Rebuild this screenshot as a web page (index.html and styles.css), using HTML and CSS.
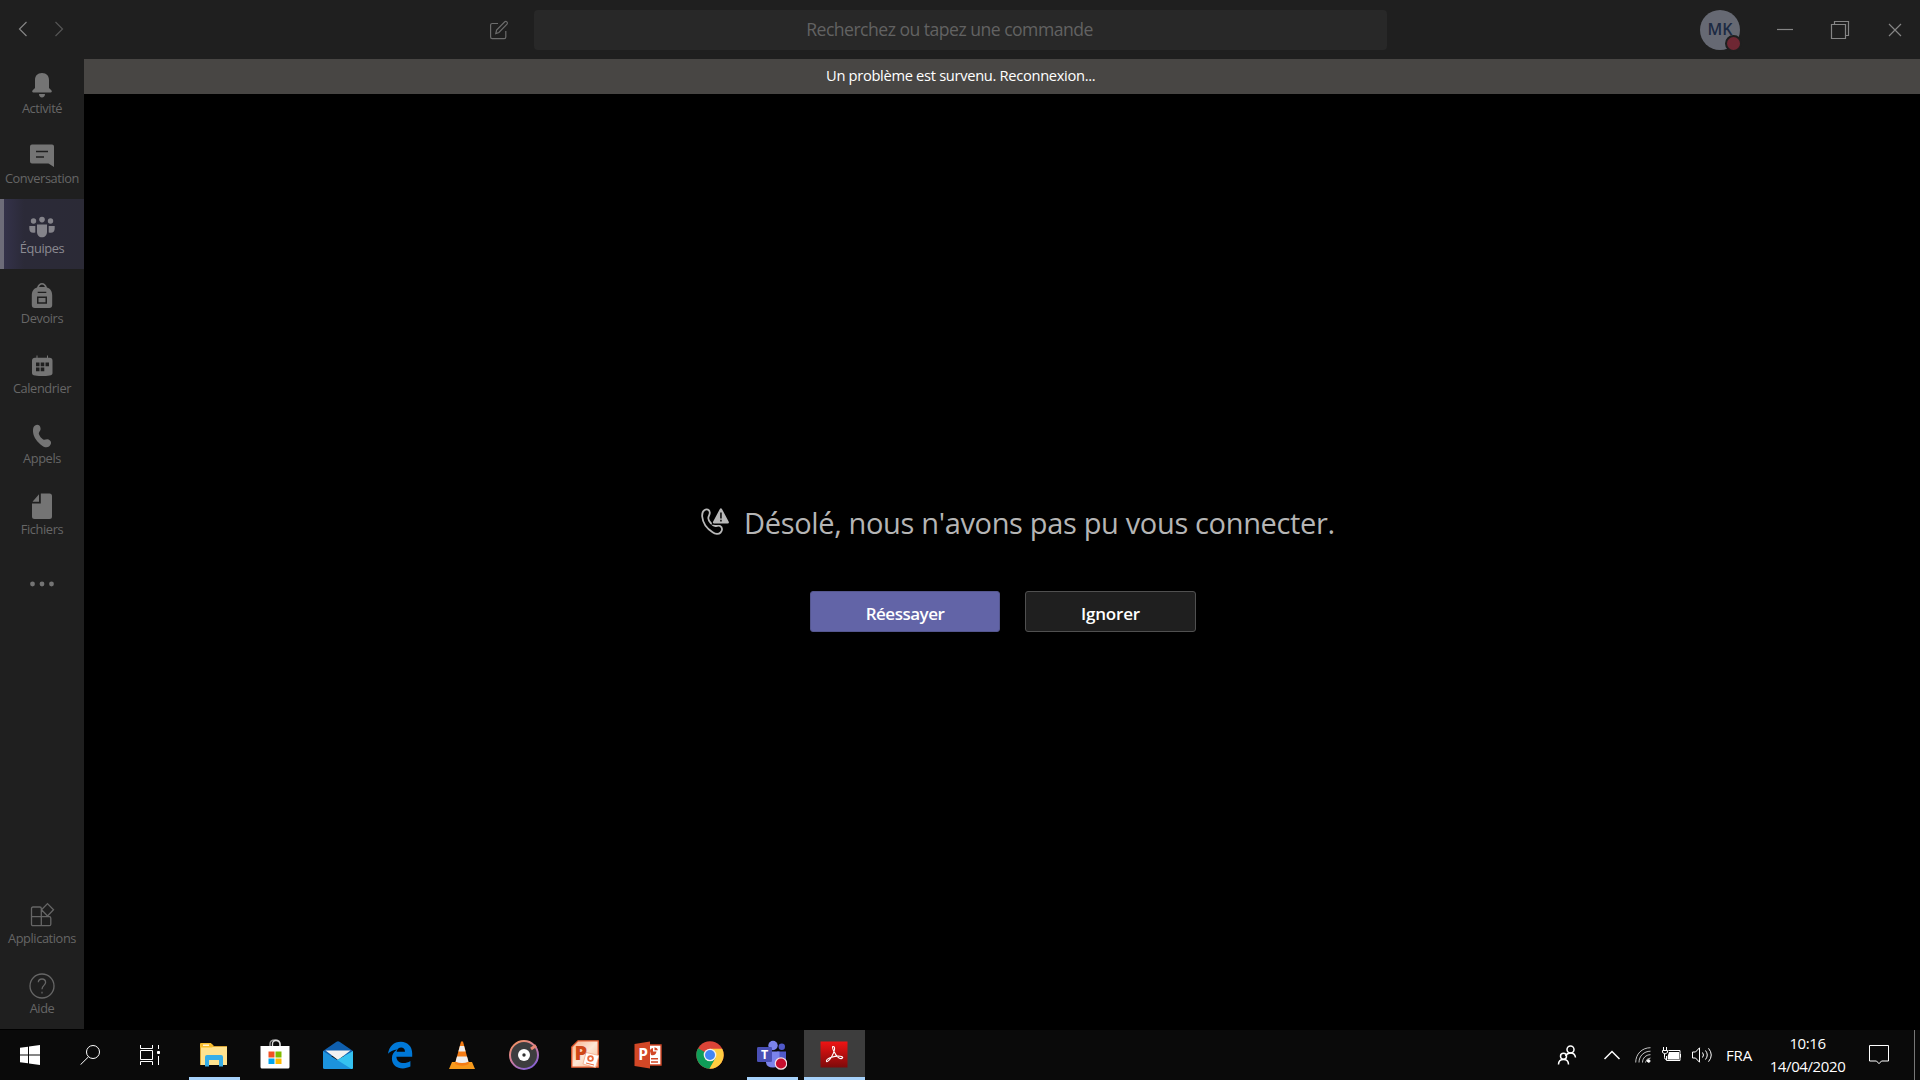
FILE: index.html
```html
<!DOCTYPE html>
<html lang="fr">
<head>
<meta charset="utf-8">
<title>Microsoft Teams</title>
<link rel="stylesheet" href="styles.css">
</head>
<body>
<div class="app">
  <header class="topbar">
    <nav class="history">
      <svg class="back" width="10" height="16" viewBox="0 0 10 16"><path d="M8.500 1 1.500 8l7 7"/></svg>
      <svg class="forward" width="10" height="16" viewBox="0 0 10 16"><path d="M1.500 1l7 7-7 7"/></svg>
    </nav>
    <svg class="compose" width="20" height="20" viewBox="0 0 20 20"><path d="M9 3.500H3.200Q1.600 3.500 1.600 5v12q0 1.600 1.600 1.600h12q1.600 0 1.600-1.600V11"/><path d="M6.800 13.500l.8-3.500 8.200-8.200q1-.9 2.100.1t.1 2.300l-8.100 8.300z"/></svg>
    <div class="search"><span class="t-search">Recherchez ou tapez une commande</span></div>
    <div class="controls">
      <div class="avatar">MK<i class="status"></i></div>
      <svg class="win" width="20" height="20" viewBox="0 0 20 20"><path d="M2 9.500h16"/></svg>
      <svg class="win" width="20" height="20" viewBox="0 0 20 20"><path d="M1.500 4.500h14v14h-14zM4.500 4V1.500h14v14H16"/></svg>
      <svg class="win" width="20" height="20" viewBox="0 0 20 20"><path d="M4 4l12 12M16 4L4 16"/></svg>
    </div>
  </header>
  <div class="body">
    <aside class="rail">
      <a class="item high"><svg width="26" height="26" viewBox="0 0 26 26"><path d="M13 1c4.600 0 7 3 7 7v8l2.300 2.200c1 1 .5 2.300-.7 2.300H4.400c-1.200 0-1.700-1.300-.7-2.300L6 16V8c0-4 2.400-7 7-7zM10 22h6c0 2-1.300 3.500-3 3.500S10 24 10 22z"/></svg><span>Activité</span></a>
      <a class="item"><svg width="26" height="26" viewBox="0 0 26 26"><path fill-rule="evenodd" d="M3 1.500h20q2 0 2 2V24L19.500 20.500H3q-2 0-2-2v-15q0-2 2-2zM7 7.800v1.400h12V7.800zM7 13.300v1.400h8v-1.400z"/></svg><span>Conversation</span></a>
      <a class="item active"><svg width="28" height="26" viewBox="0 0 28 26"><circle cx="5.500" cy="8" r="2.700"/><circle cx="14" cy="6.600" r="2.800"/><circle cx="22.500" cy="8" r="2.700"/><path d="M9 11.500h10v7.200c0 3.500-2 5.600-5 5.600s-5-2.100-5-5.600zM1.300 13h6v6.500c-3.700 1.200-6-.7-6-4zM26.700 13h-6v6.500c3.700 1.200 6-.7 6-4z"/></svg><span>Équipes</span></a>
      <a class="item"><svg width="26" height="26" viewBox="0 0 26 26"><path fill-rule="evenodd" d="M8 4.500Q9.500 0 13 0t5 4.500c3.200.8 5.200 3.800 5.200 8V22q0 3-3 3H5.800q-3 0-3-3v-9.500c0-4.200 2-7.200 5.200-8zM10 4h6q-.8-2.500-3-2.500T10 4zM8.700 8.800V10h8.600V8.800zM8 13.500v7.200h10v-7.200zM9.500 15h7v4.200h-7z"/></svg><span>Devoirs</span></a>
      <a class="item"><svg width="26" height="26" viewBox="0 0 26 26"><path fill-rule="evenodd" d="M7.500 2.500h1V4.800h9.500V2.500h1v2.300h1.500q3 0 3 3V20q0 2-3 2.500-7 1.200-14.500 0-3-.5-3-2.500V7.800q0-3 3-3h1.500zM7 9.500v3.700h3.500V9.500zM11.700 9.500v3.700h3.600V9.500zM16.500 9.500v3.700H20V9.500zM7 14.500v3.700h3.500v-3.700zM11.700 14.500v3.700h3.600v-3.700z"/></svg><span>Calendrier</span></a>
      <a class="item"><svg width="26" height="26" viewBox="0 0 26 26"><path d="M6 2.500c2.500-1.500 5-.5 5.500 2.500.5 3-1.500 3.500-1.700 5.300-.1 2 3.200 6.200 5.200 6.400 1.500.1 2.800-1.300 5 0 3 1.700 2.500 4.800 0 6.700-2 1.500-5 1-8.500-2C6.500 17.300 4.200 12.500 4 8.500 3.900 5.500 4.300 3.500 6 2.500z"/></svg><span>Appels</span></a>
      <a class="item high"><svg width="26" height="28" viewBox="0 0 26 28"><path d="M11.800 1.500H20.500q2.500 0 2.500 2.500V24.500Q23 27 20.500 27h-15Q3 27 3 24.500V11.600h8.800z"/><path d="M10 2.300V9.800H3.500z"/></svg><span>Fichiers</span></a>
      <a class="item more"><svg width="26" height="6" viewBox="0 0 26 6"><circle cx="3.500" cy="3" r="2.400"/><circle cx="13" cy="3" r="2.400"/><circle cx="22.500" cy="3" r="2.400"/></svg></a>
      <a class="item high line first-bottom"><svg width="26" height="26" viewBox="0 0 26 26"><path d="M12.300 14.700h8q1.500 0 1.500 1.500v6q0 1.500-1.500 1.500H4Q2.500 23.700 2.500 22.200V6.500Q2.500 5 4 5h6.800q1.500 0 1.500 1.500v17.200M2.500 14.700h9.800M18.500 1.600l6 6.200-6 6.200-6-6.200z"/></svg><span>Applications</span></a>
      <a class="item line"><svg width="26" height="26" viewBox="0 0 26 26"><circle cx="13" cy="13" r="12"/><path d="M9.300 9.300Q9.500 6 13 6t3.600 3.300C16.600 12.500 13 12.300 13 16.200M13 18.700v1.800"/></svg><span>Aide</span></a>
    </aside>
    <main class="stage">
      <div class="banner"><span class="t-banner">Un problème est survenu. Reconnexion...</span></div>
      <section class="dialog">
        <h1 class="headline">
          <svg width="28" height="28" viewBox="0 0 28 28"><path class="ln" d="M3.300 2.200C5.800.6 8.500 1.600 8.800 4.500 9 7 7.200 8 7.300 10.200c.1 3 4.200 7.600 7 7.800 1.800.1 3.200-1 4.800 0 2.500 1.500 2.500 4.500.5 6.500-2 2-5.500 1.500-8-.2C6.500 21 1.800 15 1.200 8.500 1 5.500 1.300 3.500 3.300 2.200z"/><path class="halo" d="M20 1.200l7.200 14H12.700z"/><path fill-rule="evenodd" d="M18.700 1.300q1.200-2 2.400 0L27.600 13.500q1 2-1 2H13.200q-2 0-1-2zM19.200 4.500v6h1.500v-6zM19.200 11.800v1.700h1.500v-1.700z"/></svg>
          <span class="t-head">Désolé, nous n'avons pas pu vous connecter.</span>
        </h1>
        <div class="actions">
          <button class="btn primary"><span class="t-retry">Réessayer</span></button>
          <button class="btn secondary"><span class="t-ignore">Ignorer</span></button>
        </div>
      </section>
    </main>
  </div>
</div>
<footer class="taskbar">
  <div class="sys"><svg width="20" height="20" viewBox="0 0 20 20" fill="#fff"><path d="M0 2.800l8-1.100V9.500H0zM9 1.500L20 0v9.500H9zM0 10.500h8v7.800l-8-1.100zM9 10.500h11V20L9 18.500z"/></svg></div>
  <div class="sys"><svg class="wl" width="20" height="20" viewBox="0 0 20 20"><circle cx="13" cy="7" r="6.500"/><path d="M8.500 11.800L.5 19.700"/></svg></div>
  <div class="sys"><svg class="wl" width="20" height="20" viewBox="0 0 20 20"><path d="M.5 0v3.500h12V0M.5 5.500h12v9H.5zM.5 20v-3.500h12V20M18.500 0v4M18.500 11v9"/><path d="M17.500 6.500h2v2h-2z" fill="#fff"/></svg></div>
  <div class="apps">
    <div class="slot open"><svg width="28" height="24" viewBox="0 0 28 24"><path d="M0 1h12l2 2h13v19H0z" fill="#d8a436"/><path d="M1 4h26v18H1z" fill="#ffe38f"/><path d="M0 1Q0 0 1 0h10l2.500 3.500L12 4.500H0z" fill="#f7bd2d"/><path d="M3 1.500h6v1.500H3z" fill="#fff3d0"/><path d="M5 14q0-2 2-2h14q2 0 2 2v9.500h-4V17H9v6.500H5z" fill="#36aee8"/></svg></div>
    <div class="slot viewer"><svg width="30" height="30" viewBox="0 0 30 30"><path d="M10 8V5q0-4 5-4t5 4v3" fill="none" stroke="#999" stroke-width="1.400"/><path d="M12.500 8V5q0-3.500 3.500-3.500T20 5v3" fill="none" stroke="#ddd" stroke-width="1.300"/><path d="M.5 7h29v21q0 1.500-1.500 1.500H2Q.5 29.500.5 28z" fill="#fff"/><path d="M8.500 12.500h6v6h-6z" fill="#f25022"/><path d="M15.500 12.500h6v6h-6z" fill="#7fba00"/><path d="M8.500 19.500h6v5.500h-6z" fill="#00a4ef"/><path d="M15.500 19.500h6v5.500h-6z" fill="#ffb900"/></svg></div>
    <div class="slot"><svg width="30" height="28" viewBox="0 0 30 28"><path d="M0 10L13.500.8q1.500-1 3 0L30 10v5H0z" fill="#0f5fae"/><path d="M2.500 9.500h25L15 19z" fill="#f2f2f2"/><path d="M30 10v17q0 1-1 1H2L14 19z" fill="#35c2f1"/><path d="M0 10l28.500 18H1.500Q0 28 0 26.500z" fill="#1c93dd"/></svg></div>
    <div class="slot"><svg width="26" height="28" viewBox="0 0 26 28"><path d="M1 12.800C2 5.500 7 .8 13.800.8 21 .8 25.200 6 25.200 12.200v3.500H9.400c.3 7 8.500 7.700 14 4.200v5.700c-8.500 4.200-18.500 1-18.500-8.200 0-4 2-7 5.200-8.900-4 .6-7.100 2-9.100 4.300zm8.600-2H18c0-6-7.800-5.300-8.400 0z" fill="#0078d7"/></svg></div>
    <div class="slot"><svg width="26" height="28" viewBox="0 0 26 28"><path d="M3 21h20l3 7H0z" fill="#f79a1c"/><path d="M12 .5h2L20 23q-7 3.500-14 0z" fill="#f57c14"/><path d="M10.900 5h4.200l1.500 5.500H9.400zM8 15.500h10l1.500 5.200q-6.500 2.600-13 0z" fill="#eee"/></svg></div>
    <div class="slot"><svg width="30" height="30" viewBox="0 0 30 30"><defs><linearGradient id="ring" x1="0" y1="0" x2=".6" y2="1"><stop offset="0" stop-color="#f79456"/><stop offset=".5" stop-color="#d6819a"/><stop offset="1" stop-color="#8a62cf"/></linearGradient></defs><circle cx="15" cy="15" r="14" fill="#3d3d3f" stroke="url(#ring)" stroke-width="2"/><path d="M22 9l5-3.500" stroke="#e78674" stroke-width="3"/><circle cx="15" cy="15" r="6" fill="#fff"/><circle cx="15" cy="15" r="1.700" fill="#333"/></svg></div>
    <div class="slot viewer"><svg width="28" height="28" viewBox="0 0 28 28"><defs><linearGradient id="ppv" x1="0" y1="0" x2="1" y2="1"><stop offset="0" stop-color="#f7b08c"/><stop offset=".5" stop-color="#fde6d5"/><stop offset="1" stop-color="#f9b68f"/></linearGradient></defs><path d="M7 .8h20.200v26.400H.8V7z" fill="url(#ppv)" stroke="#e4582c" stroke-width="1.300"/><path d="M15 12.500l13 3-3.500 12L12 24z" fill="#fff" stroke="#f3a27d" stroke-width=".7"/><circle cx="19.500" cy="18.500" r="2.400" fill="none" stroke="#ec6c3f" stroke-width="1.800"/><path d="M15 23l8 2" stroke="#ec6c3f"/><text class="glyph bold" x="3.500" y="19.500" font-size="20" fill="#cf4717">P</text></svg></div>
    <div class="slot"><svg width="28" height="28" viewBox="0 0 28 28"><path d="M14 4h13v20H14z" fill="#fff" stroke="#d24726" stroke-width="1.400"/><path d="M.5 3L16 .5v27L.5 25z" fill="#d24726"/><text class="glyph" x="4.200" y="19.300" font-size="15.500" fill="#fff">P</text><path d="M17 14q5 1 5.500-3.500H19V7q-3 .5-3 3zM20.500 6.200q3 .3 3.500 3h-3.500zM17 17h7v1.600h-7zM17 20.200h7v1.600h-7z" fill="#d24726"/></svg></div>
    <div class="slot"><svg width="28" height="28" viewBox="0 0 28 28"><circle cx="14" cy="14" r="13.700" fill="#db4437"/><path d="M14 14L2.100 7.200A13.700 13.700 0 0 0 13.700 27.700L20 17z" fill="#0f9d58"/><path d="M14 7.800h12.200A13.700 13.700 0 0 1 13.400 27.700L19.500 17z" fill="#ffcd40"/><circle cx="14" cy="14" r="6.300" fill="#f1f1f1"/><circle cx="14" cy="14" r="5" fill="#4285f4"/></svg></div>
    <div class="slot open"><svg width="30" height="30" viewBox="0 0 30 30"><circle cx="16" cy="5.500" r="4.700" fill="#7b83eb"/><circle cx="24.800" cy="6.800" r="3.200" fill="#5059c9"/><path d="M20 11.500h9v9q0 4-4.500 4.500z" fill="#5059c9"/><path d="M9 11.500h13.500v10q0 6-6.500 6t-7-5z" fill="#7b83eb"/><path d="M1.500 7h12.200Q15 7 15 8.300v12.400Q15 22 13.700 22H1.300Q0 22 0 20.700V8.300Q0 7 1.500 7z" fill="#4a50b5"/><text class="glyph" x="3.900" y="19" font-size="12.500" fill="#fff">T</text><circle cx="24" cy="23.500" r="5.700" fill="#c50f2f" stroke="#f2dfe4" stroke-width="1.200"/></svg></div>
    <div class="slot open current"><svg width="28" height="27" viewBox="0 0 28 27"><defs><linearGradient id="pdf" x1="0" y1="0" x2="0" y2="1"><stop offset="0" stop-color="#f01414"/><stop offset="1" stop-color="#7d0a0a"/></linearGradient></defs><path d="M.5.500h27v26H.5z" fill="url(#pdf)"/><path d="M12.800 5.500C16 5 14.500 11 11.500 16S6 21.500 6.500 19.500 15 14.500 20 15.200s2 3.300-1 1.800S11.500 6.500 12.800 5.500z" fill="none" stroke="#fff" stroke-width="1.100"/></svg></div>
  </div>
  <div class="tray">
    <div><svg class="wl b" width="20" height="20" viewBox="0 0 20 20"><circle cx="13.500" cy="4.500" r="3.500"/><path d="M8.500 11q1.500-3 5-3 4.500 0 5 4.500"/><circle cx="6.500" cy="11.300" r="3"/><path d="M1.500 19.500q0-5 5-5t5 5"/></svg></div>
    <div class="chevron"><svg class="wl b" width="16" height="10" viewBox="0 0 16 10"><path d="M.5 9L8 1.500 15.500 9"/></svg></div>
    <div><svg class="wl" width="16" height="18" viewBox="0 0 16 18"><path d="M.7 16.500C.7 8 7 1.700 15.500 1.700M4 16.500C4 10 9 5.200 15.500 5.200M7.500 16.500C7.500 12 11 8.700 15.500 8.700M10.500 16.500q.5-4 5-4.500" opacity=".75"/><circle cx="13.700" cy="15" r="1.300" fill="#fff"/></svg></div>
    <div><svg class="wl" width="20" height="16" viewBox="0 0 20 16"><path d="M6.500 3.500h11.500v10H4.500V9M18.500 7v3.500M2.500 7v3.500q0 2 2 2M1.500 0v3M4.500 0v3M.5 3.500h5v2q-2.500 3-5 0z"/><path d="M7 5h10v7.500H5.700V9z" fill="#fff" stroke="none"/></svg></div>
    <div><svg class="wl" width="22" height="18" viewBox="0 0 22 18"><path d="M1.500 6h3L8.500 1.800v14.400L4.500 12h-3z"/><path d="M11.500 6.500q2 2.500 0 5M14.500 4.500q3.500 4.500 0 9M17.500 2.300q5.500 6.700 0 13.400"/></svg></div>
    <div class="lang"><span class="t-lang">FRA</span></div>
    <div class="clock"><span class="t-time">10:16</span><span class="t-date">14/04/2020</span></div>
    <div><svg class="wl" width="20" height="20" viewBox="0 0 20 20"><path d="M.5.500h19v15.500h-7L10 18.700 7.500 16h-7z"/></svg></div>
    <div class="desktop"></div>
  </div>
</footer>
</body>
</html>
```
FILE: styles.css
```css
* { box-sizing: border-box; }
body {
  margin: 0;
  width: 1920px;
  height: 1080px;
  overflow: hidden;
  display: flex;
  flex-direction: column;
  background: #000;
  font-family: "Open Sans", "Noto Sans", sans-serif;
}
svg { display: block; flex: none; }
span { white-space: nowrap; }

.app { height: 1030px; display: flex; flex-direction: column; }
.topbar {
  height: 59px;
  background: #1f1f1f;
  display: grid;
  grid-template-columns: 490px 44px 853px 1fr;
  align-items: center;
}
.topbar svg { fill: none; stroke: #747474; stroke-width: 1.2; }
.history { display: flex; gap: 26px; padding: 0 0 1px 18px; }
.topbar .back { stroke: #858585; }
.topbar .forward { stroke: #555; }
.topbar .compose { margin-left: -1px; stroke: #6c6c6c; }
.search {
  height: 40px;
  padding: 0 22px 2px 0;
  border-radius: 4px;
  background: #282828;
  display: flex;
  align-items: center;
  justify-content: center;
  font-size: 17.6px;
  letter-spacing: -0.52px;
  color: #626262;
}
.controls { display: flex; align-items: center; padding-left: 313px; }
.avatar {
  position: relative;
  width: 40px;
  height: 40px;
  margin-right: 35px;
  border-radius: 50%;
  background: #666973;
  color: #1c2a42;
  font-size: 16px;
  font-weight: 600;
  line-height: 39px;
  text-align: center;
}
.status {
  position: absolute;
  right: -2px;
  bottom: -2px;
  width: 17px;
  height: 17px;
  border: 2px solid #1f1f1f;
  border-radius: 50%;
  background: #6e2733;
}
.win { margin-right: 35px; }
.topbar .win { stroke: #858585; }

.body { flex: 1; display: flex; }
.rail {
  width: 84px;
  height: 970px;
  background: #1f1f1f;
  display: flex;
  flex-direction: column;
}
.item {
  height: 70px;
  display: flex;
  flex-direction: column;
  align-items: center;
  justify-content: space-between;
  padding: 14px 0 12px;
  fill: #747474;
  color: #666;
  font-size: 12.8px;
  line-height: 18px;
}
.high { padding-top: 13px; }
.item span { letter-spacing: -0.4px; }
.active {
  border-left: 4px solid #6d6c79;
  padding-right: 4px;
  background: linear-gradient(90deg, #34324a, #2b2a38 25%, #2b2a36);
  fill: #84838a;
  color: #8b8a92;
}
.more { justify-content: center; padding: 0; }
.line svg { fill: none; stroke: #666; stroke-width: 1.3; }
.first-bottom { margin-top: auto; }

.stage { flex: 1; }
.banner {
  height: 35px;
  background: #484644;
  color: #fff;
  font-size: 14.7px;
  font-weight: 500;
  letter-spacing: -0.32px;
  line-height: 33px;
  padding-left: 742px;
}
.dialog { padding: 402px 0 0 617px; }
.headline {
  margin: 0;
  display: flex;
  align-items: center;
  gap: 15px;
  height: 52px;
  color: #b5b5b5;
  font-size: 29px;
  font-weight: 400;
  letter-spacing: -0.34px;
  fill: #b8b8b8;
}
.ln { fill: none; stroke: #b8b8b8; stroke-width: 1.8; }
.halo { fill: #000; stroke: #000; stroke-width: 3; }
.actions { display: flex; gap: 25px; padding: 43px 0 0 109px; }
.btn {
  height: 41px;
  padding: 3px 0 0;
  border-radius: 3px;
  color: #fff;
  font: 600 17px "Open Sans", "Noto Sans", sans-serif;
  letter-spacing: -0.5px;
}
.secondary { letter-spacing: -0.2px; }
.primary { width: 190px; background: #6264a7; border: 1px solid #55578f; }
.secondary { width: 171px; background: #1f1f1f; border: 1px solid #505050; }

.taskbar { height: 50px; display: flex; background: #0a0a0a; }
.sys { width: 60px; display: flex; align-items: center; justify-content: center; }
.wl { fill: none; stroke: #fff; stroke-width: 1; }
.b { stroke-width: 1.5; }
.glyph { font-family: "Open Sans", sans-serif; font-weight: 700; }
.bold { font-weight: 800; }
.apps { display: flex; margin-left: 3px; }
.slot { width: 62px; padding-bottom: 1px; display: flex; align-items: center; justify-content: center; }
.viewer { padding: 0 2px 2px 0; }
.open { background: linear-gradient(#a6d2fb, #a6d2fb) center bottom / 51px 3px no-repeat; }
.current { background: linear-gradient(#a6d2fb, #a6d2fb) 1px bottom / 61px 3px no-repeat, linear-gradient(90deg, #0a0a0a 1px, #3d3d3d 1px); }
.tray {
  margin-left: auto;
  display: grid;
  grid-template-columns: 44px 39px 30px 28px 32px 40px 99px 44px 19px;
  color: #fff;
  font-size: 15px;
}
.tray > div { display: flex; align-items: center; justify-content: center; }
.tray > .chevron { padding-left: 7px; }
.tray > .lang { padding-left: 2px; letter-spacing: -0.2px; }
.tray > .clock { flex-direction: column; line-height: 23px; letter-spacing: -0.4px; }
.desktop { border-left: 1px solid #777; margin-left: 13px; }
```
